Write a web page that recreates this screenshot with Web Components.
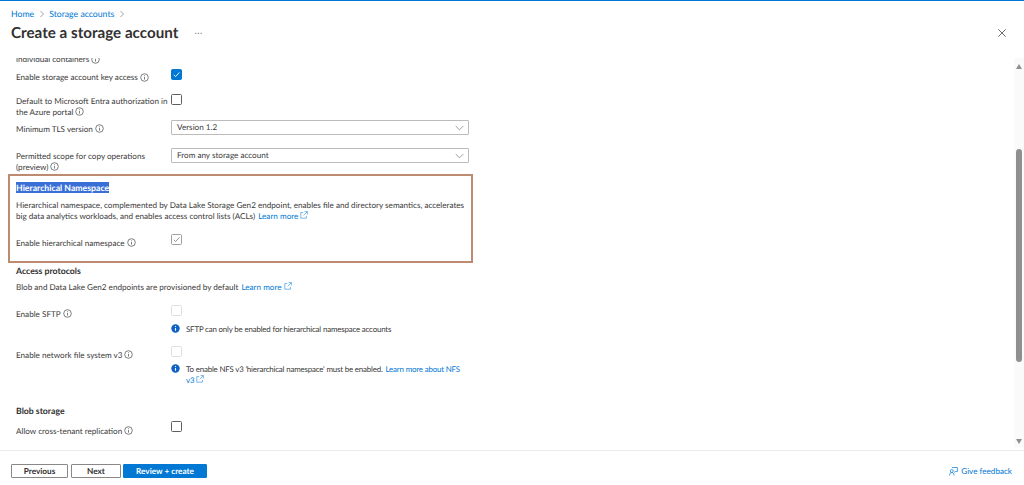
<!DOCTYPE html>
<html lang="en">
<head>
<meta charset="utf-8">
<title>Create a storage account</title>
<style>
    html, body { margin: 0; height: 100%; overflow: hidden; background: #fff; }
    body { font-family: Lato, "Liberation Sans", sans-serif; font-size: 8.15px; line-height: 11px; color: #3b3a39; text-rendering: geometricPrecision; }
</style>
</head>
<body>
<az-blade>
    <az-header slot="header" title="Create a storage account"></az-header>

    <az-row style="margin-top:-4px" label="individual containers" info></az-row>
    <az-row style="margin-top:4px" label="Enable storage account key access" info off="3">
        <az-check state="on"></az-check>
    </az-row>
    <az-row style="margin-top:11px" label="Default to Microsoft Entra authorization in the Azure portal" info off="1.5">
        <az-check></az-check>
    </az-row>
    <az-row style="margin-top:2.5px" label="Minimum TLS version" info off="3.5">
        <az-select value="Version 1.2"></az-select>
    </az-row>
    <az-row style="margin-top:13px" label="Permitted scope for copy operations (preview)" info off="2.5">
        <az-select value="From any storage account"></az-select>
    </az-row>

    <az-callout style="margin-top:1.5px">
        <az-heading mark>Hierarchical Namespace</az-heading>
        <az-copy style="margin-top:6.5px">Hierarchical namespace, complemented by Data Lake Storage Gen2 endpoint, enables file and directory semantics, accelerates<br>big data analytics workloads, and enables access control lists (ACLs) <az-link external>Learn more</az-link></az-copy>
        <az-row inset style="margin-top:12.5px" label="Enable hierarchical namespace" info off="3.5">
            <az-check state="locked"></az-check>
        </az-row>
    </az-callout>

    <az-heading style="margin:2px 0 0 16px">Access protocols</az-heading>
    <az-copy style="margin:6px 0 0 16px">Blob and Data Lake Gen2 endpoints are provisioned by default <az-link external>Learn more</az-link></az-copy>

    <az-row style="margin-top:12.5px" label="Enable SFTP" info off="3.5">
        <az-check state="off"></az-check>
        <az-note style="margin-top:7.5px">SFTP can only be enabled for hierarchical namespace accounts</az-note>
    </az-row>
    <az-row style="margin-top:11.5px" label="Enable network file system v3" info off="3.5">
        <az-check state="off"></az-check>
        <az-note style="margin-top:6.5px">To enable NFS v3 'hierarchical namespace' must be enabled. <az-link>Learn more about NFS</az-link><br><az-link external style="margin-left:0">v3</az-link></az-note>
    </az-row>

    <az-heading style="margin:19px 0 0 16px">Blob storage</az-heading>
    <az-row style="margin-top:5.5px" label="Allow cross-tenant replication" info off="4.5">
        <az-check></az-check>
    </az-row>

    <az-footer slot="footer"></az-footer>
</az-blade>

<script>
const INFO_ICON = `<svg width="9" height="9" viewBox="0 0 9 9" fill="none" stroke="#605e5c" stroke-width=".8" style="display:block"><circle cx="4.5" cy="4.5" r="3.8"/><path d="M4.5 4v2.6M4.5 2.3v.9"/></svg>`;
const EXTERNAL_ICON = `<svg width="8" height="8" viewBox="0 0 8 8" fill="none" stroke="#0078d4" stroke-width=".7" opacity=".75" style="display:inline-block;vertical-align:-.5px;margin-left:2px"><path d="M3.2 1.6H.8v5.6h5.6V4.8M4.6.6h2.8v2.8M7.4.6 3.6 4.4"/></svg>`;

class AzBlade extends HTMLElement {
    connectedCallback() {
        this.attachShadow({ mode: 'open' });
        this.shadowRoot.innerHTML = `
            <style>
                :host { display: flex; flex-direction: column; height: 485px; border-top: 1px solid #0078d4; box-sizing: border-box; }
                .main { flex: 1; min-height: 0; display: flex; }
                .scroller { flex: 1; min-width: 0; overflow: hidden; }
                az-scrollbar { margin-bottom: 3px; }
            </style>
            <slot name="header"></slot>
            <div class="main">
                <div class="scroller"><slot></slot></div>
                <az-scrollbar></az-scrollbar>
            </div>
            <slot name="footer"></slot>
        `;
    }
}

class AzHeader extends HTMLElement {
    connectedCallback() {
        this.attachShadow({ mode: 'open' });
        this.shadowRoot.innerHTML = `
            <style>
                :host { display: block; height: 57px; padding: 0 18px 0 11px; }
                .crumbs { display: flex; align-items: center; gap: 3.5px; height: 23px; box-sizing: border-box; padding-top: 2px; color: #0078d4; font-size: 8.7px; }
                .crumbs svg { display: block; }
                .title-row { display: flex; align-items: center; height: 18px; }
                h1 { margin: 0; font-size: 15.2px; line-height: 18px; font-weight: 700; color: #323130; }
                .more { margin-left: 16px; color: #8a8886; font-size: 9px; letter-spacing: .5px; line-height: 18px; }
                .close { margin-left: auto; display: block; }
            </style>
            <div class="crumbs">
                <span>Home</span>
                <svg width="8" height="8" viewBox="0 0 8 8" fill="none" stroke="#8a8886" stroke-width=".8"><path d="M2.5 1 5.5 4 2.5 7"/></svg>
                <span>Storage accounts</span>
                <svg width="8" height="8" viewBox="0 0 8 8" fill="none" stroke="#8a8886" stroke-width=".8"><path d="M2.5 1 5.5 4 2.5 7"/></svg>
            </div>
            <div class="title-row">
                <h1>${this.getAttribute('title')}</h1>
                <span class="more">···</span>
                <svg class="close" width="8" height="8" viewBox="0 0 8 8" stroke="#605e5c" stroke-width=".9"><path d="M.3.3l7.4 7.4M7.7.3.3 7.7"/></svg>
            </div>
        `;
    }
}

class AzRow extends HTMLElement {
    connectedCallback() {
        const off = this.getAttribute('off') || 0;
        const info = this.hasAttribute('info');
        this.attachShadow({ mode: 'open' });
        this.shadowRoot.innerHTML = `
            <style>
                :host { display: grid; grid-template-columns: 155px 298px; padding-left: 16px; }
                :host([inset]) { padding-left: 0; }
                .label { padding-top: ${off}px; padding-right: 2px; }
                .info { display: inline-block; vertical-align: -1.5px; margin-left: 2px; }
                .control { min-width: 0; }
            </style>
            <div class="label">${this.getAttribute('label')}${info ? `<span class="info">${INFO_ICON}</span>` : ''}</div>
            <div class="control"><slot></slot></div>
        `;
    }
}

class AzCheck extends HTMLElement {
    connectedCallback() {
        const state = this.getAttribute('state');
        const tick = state === 'on' ? '#fff' : '#8a8886';
        this.attachShadow({ mode: 'open' });
        this.shadowRoot.innerHTML = `
            <style>
                :host { display: block; width: 11px; height: 11px; box-sizing: border-box; border: 1px solid #605e5c; border-radius: 1.5px; background: #fff; }
                :host([state="on"]) { background: #0078d4; border-color: #0078d4; }
                :host([state="locked"]) { border-color: #a19f9d; }
                :host([state="off"]) { border-color: #e1dfdd; }
                svg { display: block; }
            </style>
            ${state === 'on' || state === 'locked' ? `<svg width="9" height="9" viewBox="0 0 9 9" fill="none" stroke="${tick}" stroke-width=".9"><path d="M1.8 4.8 3.6 6.6 7.4 2.4"/></svg>` : ''}
        `;
    }
}

class AzSelect extends HTMLElement {
    connectedCallback() {
        this.attachShadow({ mode: 'open' });
        this.shadowRoot.innerHTML = `
            <style>
                :host { display: flex; align-items: center; justify-content: space-between; height: 15px; box-sizing: border-box; border: 1px solid #bdbbb9; border-radius: 1px; padding: 0 4px 0 5px; }
                svg { display: block; }
            </style>
            <span>${this.getAttribute('value')}</span>
            <svg width="9" height="6" viewBox="0 0 9 6" fill="none" stroke="#8a8886" stroke-width=".8"><path d="M.7 1 4.5 4.8 8.3 1"/></svg>
        `;
    }
}

class AzCallout extends HTMLElement {
    connectedCallback() {
        this.attachShadow({ mode: 'open' });
        this.shadowRoot.innerHTML = `
            <style>
                :host { display: block; box-sizing: border-box; width: 465px; margin-left: 8px; border: 2px solid #bd8b70; padding: 6px 4px 12px 6px; }
            </style>
            <slot></slot>
        `;
    }
}

class AzHeading extends HTMLElement {
    connectedCallback() {
        this.attachShadow({ mode: 'open' });
        this.shadowRoot.innerHTML = `
            <style>
                :host { display: block; font-size: 8.7px; font-weight: 700; color: #323130; }
                :host([mark]) { width: max-content; background: #3a6fd8; color: #fff; }
            </style>
            <slot></slot>
        `;
    }
}

class AzCopy extends HTMLElement {
    connectedCallback() {
        this.attachShadow({ mode: 'open' });
        this.shadowRoot.innerHTML = `<style>:host { display: block; white-space: nowrap; }</style><slot></slot>`;
    }
}

class AzLink extends HTMLElement {
    connectedCallback() {
        this.attachShadow({ mode: 'open' });
        this.shadowRoot.innerHTML = `
            <style>:host { color: #0078d4; margin-left: 1px; white-space: nowrap; }</style>
            <slot></slot>${this.hasAttribute('external') ? EXTERNAL_ICON : ''}
        `;
    }
}

class AzNote extends HTMLElement {
    connectedCallback() {
        this.attachShadow({ mode: 'open' });
        this.shadowRoot.innerHTML = `
            <style>
                :host { display: flex; gap: 6px; font-size: 7.9px; letter-spacing: -.17px; white-space: nowrap; }
                svg { flex: none; display: block; }
            </style>
            <svg width="9" height="9" viewBox="0 0 9 9"><circle cx="4.5" cy="4.5" r="4.2" fill="#0f62c4"/><path d="M4.5 4v2.7M4.5 2v1" stroke="#fff" stroke-width="1.1"/></svg>
            <div><slot></slot></div>
        `;
    }
}

class AzScrollbar extends HTMLElement {
    connectedCallback() {
        this.attachShadow({ mode: 'open' });
        this.shadowRoot.innerHTML = `
            <style>
                :host { display: flex; flex-direction: column; align-items: center; width: 10px; flex: none; background: #fafafa; }
                .arrow { width: 0; height: 0; border-left: 3.5px solid transparent; border-right: 3.5px solid transparent; margin: 6px 0 0; }
                .up { border-bottom: 5px solid #8f8f8f; }
                .down { border-top: 5px solid #8f8f8f; margin: auto 0 3px; }
                .thumb { width: 6px; height: 213px; margin-top: 80px; border-radius: 3px; background: #8f8f8f; }
            </style>
            <div class="arrow up"></div>
            <div class="thumb"></div>
            <div class="arrow down"></div>
        `;
    }
}

class AzFooter extends HTMLElement {
    connectedCallback() {
        this.attachShadow({ mode: 'open' });
        this.shadowRoot.innerHTML = `
            <style>
                :host { display: flex; align-items: center; height: 35px; box-sizing: border-box; border-top: 1px solid #edebe9; padding: 6px 12px 0 11px; }
                button { font: 700 8.2px/12px Lato, "Liberation Sans", sans-serif; text-rendering: geometricPrecision; height: 14px; box-sizing: border-box; padding: 0; border: 1px solid #8a8886; border-radius: 1px; background: #fff; color: #323130; margin-right: 2px; }
                .prev { width: 57px; margin-right: 3px; }
                .next { width: 50px; }
                .primary { width: 84px; background: #0078d4; border-color: #0078d4; color: #fff; }
                .feedback { margin-left: auto; display: flex; align-items: center; gap: 3px; color: #0078d4; }
                .feedback svg { display: block; }
            </style>
            <button class="prev">Previous</button>
            <button class="next">Next</button>
            <button class="primary">Review + create</button>
            <div class="feedback">
                <svg width="9" height="9" viewBox="0 0 9 9" fill="none" stroke="#0078d4" stroke-width=".7"><path d="M3 .5h5.4v4H6.2L5 5.6M.5 8.5c.2-2 1-3 2.3-3s2.1 1 2.3 3M2.8 5.5a1.5 1.5 0 1 0 0-3 1.5 1.5 0 0 0 0 3"/></svg>
                <span>Give feedback</span>
            </div>
        `;
    }
}

customElements.define('az-blade', AzBlade);
customElements.define('az-header', AzHeader);
customElements.define('az-row', AzRow);
customElements.define('az-check', AzCheck);
customElements.define('az-select', AzSelect);
customElements.define('az-callout', AzCallout);
customElements.define('az-heading', AzHeading);
customElements.define('az-copy', AzCopy);
customElements.define('az-link', AzLink);
customElements.define('az-note', AzNote);
customElements.define('az-scrollbar', AzScrollbar);
customElements.define('az-footer', AzFooter);
</script>
</body>
</html>
